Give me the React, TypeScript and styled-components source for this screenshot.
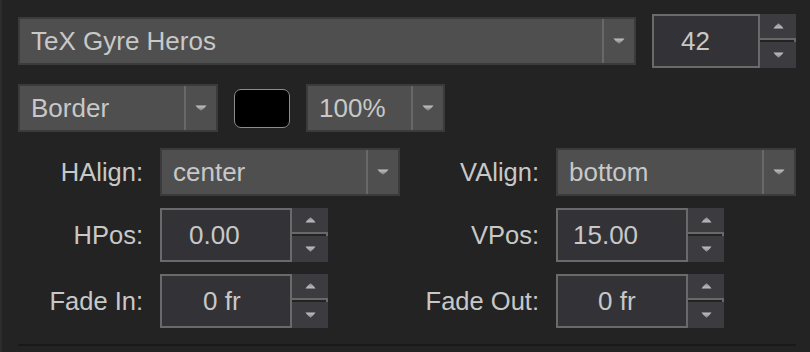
import React from 'react'
import styled, { createGlobalStyle } from 'styled-components'

const GlobalStyle = createGlobalStyle`
  html, body {
    margin: 0;
    padding: 0;
    background: #232323;
  }
  body {
    font-family: "Liberation Sans", Arial, sans-serif;
  }
`

const Panel = styled.div`
  width: 810px;
  height: 352px;
  box-sizing: border-box;
  border-left: 2px solid #2d2d2e;
  padding: 14px 14px 0 16px;
  background: #232323;
  color: #c8c8c8;
  font-size: 26px;
`

const Row = styled.div<{ $top?: number; $height: number }>`
  display: flex;
  align-items: center;
  gap: 16px;
  height: ${p => p.$height}px;
  margin-top: ${p => p.$top ?? 0}px;
`

const Select = styled.div<{ $width?: number }>`
  display: flex;
  height: 48px;
  box-sizing: border-box;
  border: 2px solid #3b3b3e;
  background: #4f4f4f;
  ${p => (p.$width ? `width: ${p.$width}px;` : 'flex: 1;')}
`

const SelectText = styled.div`
  flex: 1;
  display: flex;
  align-items: center;
  padding-left: 11px;
  white-space: nowrap;
  overflow: hidden;
`

const SelectButton = styled.div`
  width: 30px;
  border-left: 2px solid #686868;
  display: flex;
  align-items: center;
  justify-content: center;
`

const Swatch = styled.div`
  width: 56px;
  height: 39px;
  box-sizing: border-box;
  border: 1.5px solid #8c8c8c;
  border-radius: 7px;
  background: #000;
`

const Spin = styled.div<{ $width: number }>`
  display: flex;
  width: ${p => p.$width}px;
  height: 54px;
`

const SpinField = styled.div<{ $indent: number }>`
  flex: 1;
  box-sizing: border-box;
  border: 2px solid #6a6a6a;
  background: #333337;
  display: flex;
  align-items: center;
  padding-left: ${p => p.$indent}px;
  white-space: nowrap;
`

const SpinButtons = styled.div`
  width: 36px;
  display: flex;
  flex-direction: column;
  justify-content: space-between;
`

const SpinButton = styled.div<{ $up?: boolean }>`
  position: relative;
  height: 26px;
  box-sizing: border-box;
  background: #3c3c40;
  display: flex;
  align-items: center;
  justify-content: center;
  ${p =>
    p.$up &&
    `
    border-bottom: 2px solid #686868;
    &::after {
      content: '';
      position: absolute;
      right: 0;
      bottom: -4px;
      width: 2px;
      height: 2px;
      background: #686868;
    }
  `}
`

const Grid = styled.div`
  display: grid;
  grid-template-columns: 142px 240px 156px 240px;
  grid-template-rows: 48px 54px 54px;
  row-gap: 12px;
  margin-top: 16px;
  align-items: center;
`

const Label = styled.div`
  text-align: right;
  padding-right: 17px;
  white-space: nowrap;
  font-size: 25.5px;
`

const Divider = styled.div`
  margin-top: 16px;
  height: 2px;
  width: 778px;
  background: #19191a;
`

function DownArrow() {
  return (
    <svg width="12" height="6" viewBox="0 0 12 6">
      <defs>
        <linearGradient id="dn" x1="0" y1="0" x2="0" y2="1">
          <stop offset="0" stopColor="#c4c4c4" />
          <stop offset="1" stopColor="#7c7c7c" />
        </linearGradient>
      </defs>
      <path d="M0.5 0.5 H11.5 Q10 3 6 5.8 Q2 3 0.5 0.5 Z" fill="url(#dn)" />
    </svg>
  )
}

function UpArrow() {
  return (
    <svg width="11" height="6" viewBox="0 0 11 6">
      <defs>
        <linearGradient id="up" x1="0" y1="0" x2="0" y2="1">
          <stop offset="0" stopColor="#8c8c8c" />
          <stop offset="1" stopColor="#c0c0c0" />
        </linearGradient>
      </defs>
      <path d="M0.5 5.5 H10.5 Q9 3 5.5 0.3 Q2 3 0.5 5.5 Z" fill="url(#up)" />
    </svg>
  )
}

function SmallDown() {
  return (
    <svg width="11" height="6" viewBox="0 0 11 6">
      <defs>
        <linearGradient id="sd" x1="0" y1="0" x2="0" y2="1">
          <stop offset="0" stopColor="#c0c0c0" />
          <stop offset="1" stopColor="#8c8c8c" />
        </linearGradient>
      </defs>
      <path d="M0.5 0.5 H10.5 Q9 3 5.5 5.7 Q2 3 0.5 0.5 Z" fill="url(#sd)" />
    </svg>
  )
}

interface DropdownProps {
  value: string
  width?: number
}

function Dropdown({ value, width }: DropdownProps) {
  return (
    <Select $width={width}>
      <SelectText>{value}</SelectText>
      <SelectButton>
        <DownArrow />
      </SelectButton>
    </Select>
  )
}

interface SpinBoxProps {
  value: string
  width: number
  indent: number
}

function SpinBox({ value, width, indent }: SpinBoxProps) {
  return (
    <Spin $width={width}>
      <SpinField $indent={indent}>{value}</SpinField>
      <SpinButtons>
        <SpinButton $up>
          <UpArrow />
        </SpinButton>
        <SpinButton>
          <SmallDown />
        </SpinButton>
      </SpinButtons>
    </Spin>
  )
}

export default function App() {
  return (
    <>
      <GlobalStyle />
      <Panel>
        <Row $height={54}>
          <Dropdown value="TeX Gyre Heros" />
          <SpinBox value="42" width={144} indent={27} />
        </Row>
        <Row $height={48} $top={16}>
          <Dropdown value="Border" width={200} />
          <Swatch />
          <Dropdown value="100%" width={139} />
        </Row>
        <Grid>
          <Label>HAlign:</Label>
          <Dropdown value="center" width={240} />
          <Label>VAlign:</Label>
          <Dropdown value="bottom" width={240} />

          <Label>HPos:</Label>
          <SpinBox value="0.00" width={168} indent={27} />
          <Label>VPos:</Label>
          <SpinBox value="15.00" width={168} indent={15} />

          <Label>Fade In:</Label>
          <SpinBox value="0 fr" width={168} indent={41} />
          <Label>Fade Out:</Label>
          <SpinBox value="0 fr" width={168} indent={40} />
        </Grid>
        <Divider />
      </Panel>
    </>
  )
}
